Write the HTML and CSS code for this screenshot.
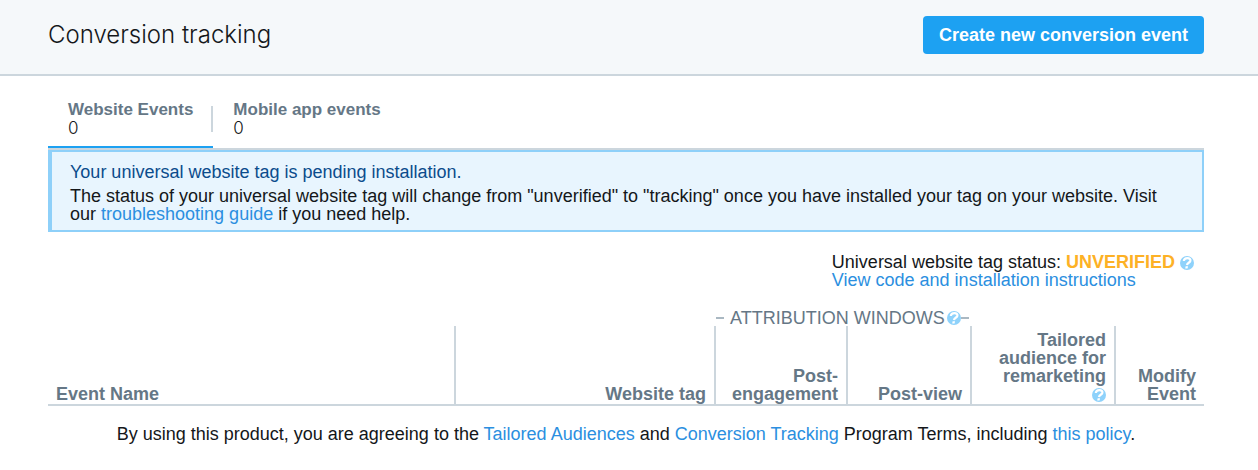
FILE: index.html
```html
<!DOCTYPE html>
<html lang="en">
<head>
  <meta charset="UTF-8">
  <meta name="viewport" content="width=device-width, initial-scale=1.0">
  <title>Conversion tracking</title>
  <link rel="stylesheet" href="styles.css">
</head>
<body>

<svg width="0" height="0" class="sprite" aria-hidden="true">
  <symbol id="help" viewBox="0 0 14 14">
    <circle cx="7" cy="7" r="7" fill="#8ed2fb"/>
    <path d="M3.800 5C4 3 5.500 2.200 7.500 2.200c2 0 3.200 1 2.900 2.600C10 6.800 7.300 6.800 6.900 9" fill="none" stroke="#fff" stroke-width="2.200"/>
    <path d="M5.600 10.200h2.400l-.4 2.200H5.200z" fill="#fff"/>
  </symbol>
</svg>

<header class="page-header">
  <h1>Conversion tracking</h1>
  <button type="button" class="create-btn">Create new conversion event</button>
</header>

<main>
  <nav class="tabs">
    <a href="#website" class="tab active">
      <span>
        <span class="label">Website Events</span>
        <span class="count">0</span>
      </span>
    </a>
    <a href="#mobile" class="tab">
      <span>
        <span class="label">Mobile app events</span>
        <span class="count">0</span>
      </span>
    </a>
  </nav>

  <section class="notice">
    <h2>Your universal website tag is pending installation.</h2>
    <p>The status of your universal website tag will change from "unverified" to "tracking" once you have installed your tag on your website. Visit our <a href="#guide">troubleshooting guide</a> if you need help.</p>
  </section>

  <section class="tag-status">
    <div>
      Universal website tag status: <strong>UNVERIFIED</strong>
      <svg class="help" role="img" aria-label="Help"><use href="#help"/></svg><br>
      <a href="#code">View code and installation instructions</a>
    </div>
  </section>

  <table class="events">
    <colgroup>
      <col>
      <col class="col-tag">
      <col class="col-engagement">
      <col class="col-view">
      <col class="col-audience">
      <col class="col-modify">
    </colgroup>
    <thead>
      <tr class="group-row">
        <td colspan="2"></td>
        <th colspan="2" scope="colgroup">
          <div class="group">ATTRIBUTION WINDOWS <svg class="help" role="img" aria-label="Help"><use href="#help"/></svg></div>
        </th>
        <td colspan="2"></td>
      </tr>
      <tr class="head-row">
        <th scope="col">Event Name</th>
        <th scope="col">Website tag</th>
        <th scope="col">Post-<br>engagement</th>
        <th scope="col">Post-view</th>
        <th scope="col">Tailored audience for remarketing<br><svg class="help" role="img" aria-label="Help"><use href="#help"/></svg></th>
        <th scope="col">Modify Event</th>
      </tr>
    </thead>
  </table>
</main>

<footer>
  By using this product, you are agreeing to the <a href="#audiences">Tailored Audiences</a> and <a href="#tracking">Conversion Tracking</a> Program Terms, including <a href="#policy">this policy</a>.
</footer>

</body>
</html>
```
FILE: styles.css
```css
* {
  box-sizing: border-box;
}
body {
  margin: 0;
  font-family: "Liberation Sans", Arial, sans-serif;
  font-size: 18px;
  line-height: 18px;
  color: #14171a;
  background: #fff;
}
a {
  color: #2b8fe0;
  text-decoration: none;
}
a:hover {
  text-decoration: underline;
}
.sprite {
  position: absolute;
}
.help {
  flex: none;
  width: 14px;
  height: 14px;
  vertical-align: -2px;
}

/* Header */
.page-header {
  display: flex;
  align-items: center;
  justify-content: space-between;
  padding: 16px 54px 20px 48px;
  background: #f5f8fa;
  border-bottom: 2px solid #ccd6dd;
}
h1 {
  margin: 0;
  font-family: Inter, "Liberation Sans", sans-serif;
  font-size: 24px;
  font-weight: 300;
  line-height: 38px;
}
.create-btn {
  height: 38px;
  padding: 0 16px;
  border: 0;
  border-radius: 4px;
  background: #1da1f2;
  color: #fff;
  font: bold 18px "Liberation Sans", Arial, sans-serif;
  cursor: pointer;
}

main {
  padding: 0 54px 0 48px;
}

/* Tabs */
.tabs {
  display: flex;
  border-bottom: 2px solid #ccd6dd;
}
.tab {
  display: flex;
  align-items: center;
  padding: 25px 0 9px 20px;
  border-bottom: 2px solid transparent;
  color: #657786;
}
.tab.active {
  border-bottom-color: #1da1f2;
}
.tab.active::after {
  content: "";
  width: 2px;
  height: 26px;
  margin-left: 18px;
  background: #ccd6dd;
}
.label {
  display: block;
  font-size: 17px;
  font-weight: bold;
}
.count {
  display: block;
  font-family: Inter, "Liberation Sans", sans-serif;
  font-size: 17px;
  font-weight: 300;
  color: #14171a;
}

/* Notice */
.notice {
  padding: 11px 18px 7px;
  border: 2px solid #8ed0f9;
  border-left-width: 4px;
  background: #e8f5fe;
}
.notice h2 {
  margin: 0 0 6px;
  font-size: 18px;
  font-weight: normal;
  color: #0b4c8c;
}
.notice p {
  margin: 0;
}

/* Tag status */
.tag-status {
  display: flex;
  justify-content: flex-end;
  padding: 21px 10px 20px;
}
.tag-status strong {
  color: #fdb125;
}

/* Events table */
.events {
  width: 100%;
  table-layout: fixed;
  border-collapse: separate;
  border-spacing: 0;
  color: #657786;
}
.col-tag { width: 260px; }
.col-engagement { width: 132px; }
.col-view { width: 124px; }
.col-audience { width: 144px; }
.col-modify { width: 88px; }

.group-row th,
.group-row td {
  padding: 0;
  font-weight: normal;
}
.group {
  display: flex;
  align-items: center;
  height: 17px;
  white-space: nowrap;
}
.group .help {
  margin-left: 2px;
}
.group::before,
.group::after {
  content: "";
  flex: none;
  width: 8px;
  height: 2px;
  background: #aab8c2;
}
.group::before {
  margin-right: 6px;
}
.head-row th {
  padding: 5px 8px 1px;
  border-right: 2px solid #ccd6dd;
  border-bottom: 2px solid #ccd6dd;
  text-align: right;
  vertical-align: bottom;
}
.head-row th:first-child {
  text-align: left;
}
.head-row th:last-child {
  border-right: 0;
}

footer {
  padding: 19px 54px 27px 48px;
  text-align: center;
}
```
